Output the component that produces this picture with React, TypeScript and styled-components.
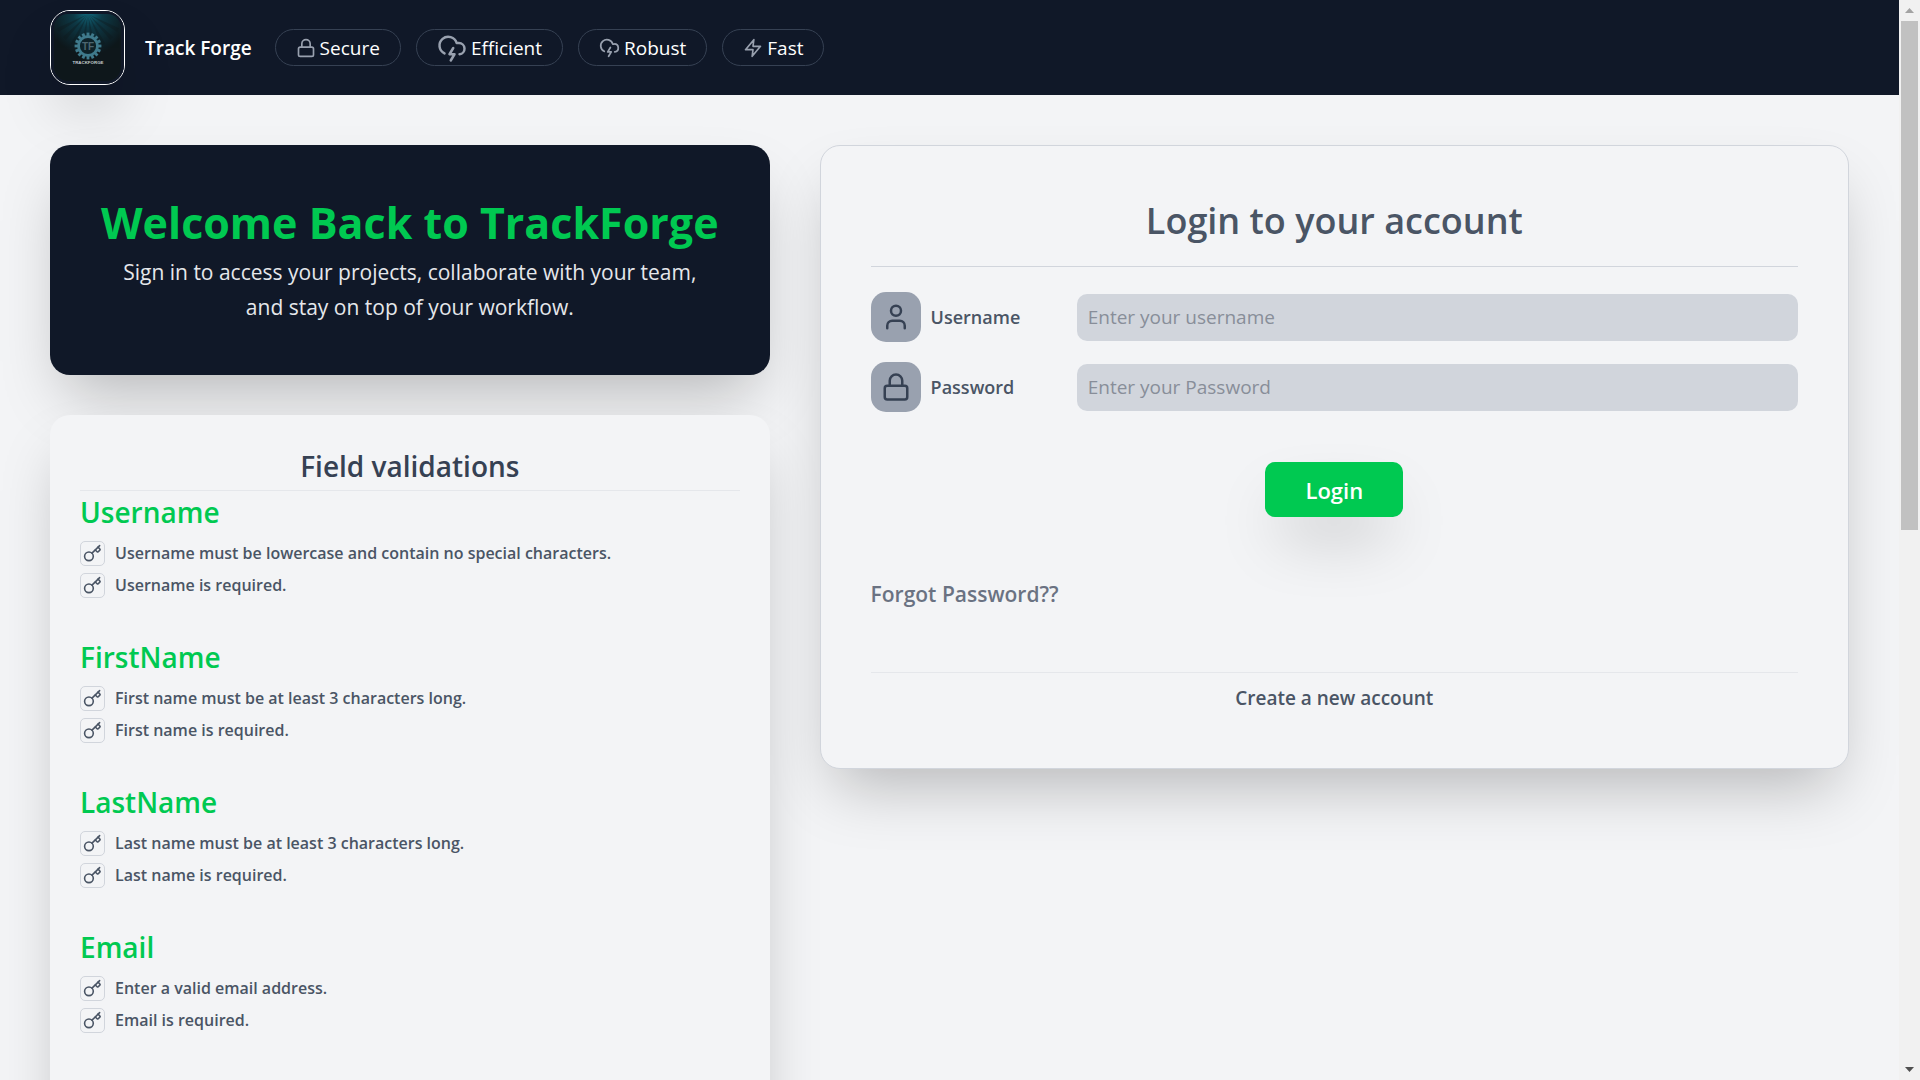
import React from "react";
import styled, { createGlobalStyle } from "styled-components";

const color = {
  navy: "#101828",
  page: "#f3f4f6",
  green: "#00c951",
  line: "#d1d5dc",
  lineSoft: "#e5e7eb",
  slate: "#99a1af",
  textSoft: "#6a7282",
  text: "#4a5565",
  textStrong: "#364153",
};

const shadow = "0 31px 62px -15px rgba(0, 0, 0, 0.25)";

const GlobalStyle = createGlobalStyle`
  *, *::before, *::after { box-sizing: border-box; }
  body {
    margin: 0;
    background: ${color.page};
    color: #000;
    font-family: "Segoe UI", "Open Sans", "Noto Sans", sans-serif;
    font-size: 19px;
    line-height: 30px;
  }
  h1, h2, h3, p, ul { margin: 0; padding: 0; }
  ul { list-style: none; }
  button, input { font: inherit; border: 0; }
  a { color: inherit; text-decoration: none; }
  svg { display: block; flex: none; }
`;

const Frame = styled.div`
  display: grid;
  grid-template-columns: minmax(0, 1fr) 21px;
  height: 100vh;
`;

const Scroller = styled.div`
  overflow-x: hidden;
  overflow-y: auto;
  scrollbar-width: none;
`;

const Page = styled.div`
  display: flex;
  flex-direction: column;
  min-height: 200vh;
`;

const Track = styled.div`
  display: flex;
  flex-direction: column;
  align-items: center;
  background: #f1f1f1;
`;

const Arrow = styled.div<{ $down?: boolean }>`
  display: grid;
  place-items: center;
  height: 21px;
  transform: ${(p) => (p.$down ? "rotate(180deg)" : "none")};
  color: ${(p) => (p.$down ? "#505050" : "#a3a3a3")};
`;

const ThumbLane = styled.div`
  flex: 1;
  width: 17px;
`;

const Thumb = styled.div`
  height: 49%;
  background: #c1c1c1;
`;

const Header = styled.header`
  display: flex;
  align-items: center;
  gap: 20px;
  padding: 10px 50px;
  background: ${color.navy};
`;

const LogoBox = styled.div`
  width: 75px;
  height: 75px;
  border: 1px solid #fff;
  border-radius: 20px;
  overflow: hidden;
  box-shadow: ${shadow};
`;

const Brand = styled.span`
  color: #fff;
  font-weight: 600;
`;

const Pills = styled.ul`
  display: flex;
  gap: 15px;
  padding-left: 3px;
`;

const Pill = styled.li`
  display: flex;
  align-items: center;
  gap: 4px;
  height: 37px;
  padding: 0 20px;
  border: 1px solid ${color.textStrong};
  border-radius: 20px;
  color: #fff;
  svg { color: ${color.slate}; }
`;

const Main = styled.main`
  flex: 1;
  display: grid;
  grid-template-columns: 40% minmax(0, 1fr);
  gap: 50px;
  padding: 50px;
`;

const LeftColumn = styled.div`
  display: flex;
  flex-direction: column;
  gap: 40px;
`;

const Welcome = styled.section`
  padding: 50px;
  border-radius: 20px;
  background: ${color.navy};
  box-shadow: ${shadow};
  text-align: center;
`;

const WelcomeTitle = styled.h1`
  padding-bottom: 4px;
  color: ${color.green};
  font-size: 43px;
  font-weight: 700;
  line-height: 56px;
`;

const WelcomeText = styled.p`
  padding: 0 15px;
  color: ${color.lineSoft};
  font-size: 21px;
  line-height: 35px;
`;

const Validations = styled.section`
  flex: 1;
  padding: 30px;
  border-radius: 20px;
  background: ${color.page};
  box-shadow: ${shadow};
`;

const ValidationsTitle = styled.h2`
  padding-bottom: 3px;
  border-bottom: 1px solid ${color.lineSoft};
  color: ${color.textStrong};
  font-size: 28px;
  font-weight: 600;
  line-height: 42px;
  text-align: center;
`;

const Group = styled.section`
  padding-bottom: 38px;
`;

const GroupTitle = styled.h3`
  padding: 1px 0 9px;
  color: ${color.green};
  font-size: 28px;
  font-weight: 600;
  line-height: 40px;
`;

const Rules = styled.ul`
  display: flex;
  flex-direction: column;
  gap: 7px;
`;

const Rule = styled.li`
  display: flex;
  align-items: center;
  gap: 10px;
  color: ${color.text};
  font-size: 16px;
  font-weight: 600;
  line-height: 25px;
`;

const KeyBox = styled.span`
  display: grid;
  place-items: center;
  width: 25px;
  height: 25px;
  border: 1px solid ${color.line};
  border-radius: 5px;
`;

const LoginCard = styled.section`
  align-self: start;
  padding: 50px;
  border: 1px solid ${color.line};
  border-radius: 20px;
  background: ${color.page};
  box-shadow: ${shadow};
`;

const LoginTitle = styled.h2`
  padding-bottom: 20px;
  border-bottom: 1px solid ${color.line};
  color: ${color.text};
  font-size: 36px;
  font-weight: 600;
  line-height: 50px;
  text-align: center;
`;

const Form = styled.form`
  display: flex;
  flex-direction: column;
  gap: 20px;
  padding-top: 25px;
`;

const Field = styled.div`
  display: grid;
  grid-template-columns: minmax(0, 2fr) minmax(0, 7fr);
  align-items: center;
`;

const FieldLabel = styled.label`
  display: flex;
  align-items: center;
  gap: 10px;
  color: ${color.text};
  font-size: 18px;
  font-weight: 600;
`;

const IconTile = styled.span`
  padding: 10px;
  border-radius: 15px;
  background: ${color.slate};
  color: ${color.textStrong};
`;

const TextBox = styled.input`
  width: 100%;
  height: 47px;
  padding: 0 11px;
  border-radius: 10px;
  background: ${color.line};
  color: ${color.textStrong};
  &::placeholder { color: #888e99; opacity: 1; }
`;

const LoginButton = styled.button`
  align-self: center;
  margin-top: 30px;
  height: 55px;
  padding: 0 40px;
  border-radius: 10px;
  background: ${color.green};
  box-shadow: ${shadow};
  color: #fff;
  font-size: 22px;
  font-weight: 600;
`;

const Forgot = styled.a`
  display: block;
  padding: 60px 0;
  color: ${color.textSoft};
  font-size: 21px;
  font-weight: 600;
  line-height: 35px;
`;

const Create = styled.a`
  display: block;
  padding: 10px 0 5px;
  border-top: 1px solid ${color.lineSoft};
  color: ${color.text};
  font-weight: 600;
  text-align: center;
`;

type IconProps = { size: number; stroke?: number };

const Icon = ({ size, stroke = 2, children }: IconProps & { children: React.ReactNode }) => (
  <svg width={size} height={size} viewBox="0 0 24 24" fill="none" stroke="currentColor"
    strokeWidth={stroke} strokeLinecap="round" strokeLinejoin="round" aria-hidden="true">
    {children}
  </svg>
);

const LockIcon = (p: IconProps) => (
  <Icon {...p}>
    <rect x="3" y="11" width="18" height="11" rx="2" />
    <path d="M7 11V7a5 5 0 0 1 10 0v4" />
  </Icon>
);

const StormIcon = (p: IconProps) => (
  <Icon {...p}>
    <path d="M6 16.326A7 7 0 1 1 15.71 8h1.79a4.5 4.5 0 0 1 .5 8.973" />
    <path d="m13 12-3 5h4l-3 5" />
  </Icon>
);

const BoltIcon = (p: IconProps) => (
  <Icon {...p}>
    <path d="M13 2 3 14h9l-1 8 10-12h-9l1-8Z" />
  </Icon>
);

const UserIcon = (p: IconProps) => (
  <Icon {...p}>
    <path d="M19 21v-2a4 4 0 0 0-4-4H9a4 4 0 0 0-4 4v2" />
    <circle cx="12" cy="7" r="4" />
  </Icon>
);

const KeyIcon = (p: IconProps) => (
  <Icon {...p}>
    <path d="m15.5 7.5 2.3 2.3a1 1 0 0 0 1.4 0l2.1-2.1a1 1 0 0 0 0-1.4L19 4" />
    <path d="m21 2-9.6 9.6" />
    <circle cx="7.5" cy="15.5" r="5.5" />
  </Icon>
);

const Logo = () => (
  <svg width="73" height="73" viewBox="0 0 73 73" role="img" aria-label="TrackForge">
    <defs>
      <radialGradient id="glow" gradientUnits="userSpaceOnUse" cx="37" cy="2" r="42">
        <stop offset="0" stopColor="#126b80" />
        <stop offset="0.35" stopColor="#0e3a47" />
        <stop offset="1" stopColor="#0e171b" />
      </radialGradient>
    </defs>
    <rect width="73" height="73" fill="#101828" />
    <rect x="3" y="3" width="67" height="67" rx="14" fill="url(#glow)" />
    <g fill="#0e171b" opacity="0.35">
      {[-62, -44, -27, -9, 9, 27, 44, 62].map((a) => (
        <path key={a} d="M37 3l-2 34h4z" transform={`rotate(${a} 37 3)`} />
      ))}
    </g>
    <g fill="#3f7a8c">
      {Array.from({ length: 16 }, (_, i) => (
        <rect key={i} x="35.6" y="21.6" width="2.8" height="4" transform={`rotate(${i * 22.5} 37 35)`} />
      ))}
    </g>
    <circle cx="37" cy="35" r="9.4" fill="#0e2229" stroke="#3f7a8c" strokeWidth="2.6" />
    <text x="37" y="39" textAnchor="middle" fontFamily="Liberation Sans, sans-serif"
      fontSize="10" fontWeight="700" fill="#4d6670">TF</text>
    <text x="37" y="53" textAnchor="middle" fontFamily="Liberation Sans, sans-serif"
      fontSize="4.4" fontWeight="700" fill="#c3cbce">TRACKFORGE</text>
  </svg>
);

const groups = [
  { title: "Username", rules: ["Username must be lowercase and contain no special characters.", "Username is required."] },
  { title: "FirstName", rules: ["First name must be at least 3 characters long.", "First name is required."] },
  { title: "LastName", rules: ["Last name must be at least 3 characters long.", "Last name is required."] },
  { title: "Email", rules: ["Enter a valid email address.", "Email is required."] },
];

const ArrowShape = () => (
  <svg width="9" height="5" viewBox="0 0 9 5"><path d="M4.5 0 9 5H0z" fill="currentColor" /></svg>
);

export default function App() {
  return (
    <>
      <GlobalStyle />
      <Frame>
        <Scroller>
          <Page>
            <Header>
              <LogoBox><Logo /></LogoBox>
              <Brand>Track Forge</Brand>
              <Pills>
                <Pill><LockIcon size={20} />Secure</Pill>
                <Pill><StormIcon size={30} />Efficient</Pill>
                <Pill><StormIcon size={21} />Robust</Pill>
                <Pill><BoltIcon size={20} />Fast</Pill>
              </Pills>
            </Header>
            <Main>
              <LeftColumn>
                <Welcome>
                  <WelcomeTitle>Welcome Back to TrackForge</WelcomeTitle>
                  <WelcomeText>
                    Sign in to access your projects, collaborate with your team, and stay on top of your workflow.
                  </WelcomeText>
                </Welcome>
                <Validations>
                  <ValidationsTitle>Field validations</ValidationsTitle>
                  {groups.map((g) => (
                    <Group key={g.title}>
                      <GroupTitle>{g.title}</GroupTitle>
                      <Rules>
                        {g.rules.map((r) => (
                          <Rule key={r}><KeyBox><KeyIcon size={19} /></KeyBox>{r}</Rule>
                        ))}
                      </Rules>
                    </Group>
                  ))}
                </Validations>
              </LeftColumn>
              <LoginCard>
                <LoginTitle>Login to your account</LoginTitle>
                <Form onSubmit={(e) => e.preventDefault()}>
                  <Field>
                    <FieldLabel htmlFor="username"><IconTile><UserIcon size={30} /></IconTile>Username</FieldLabel>
                    <TextBox id="username" type="text" placeholder="Enter your username" />
                  </Field>
                  <Field>
                    <FieldLabel htmlFor="password"><IconTile><LockIcon size={30} /></IconTile>Password</FieldLabel>
                    <TextBox id="password" type="password" placeholder="Enter your Password" />
                  </Field>
                  <LoginButton type="submit">Login</LoginButton>
                </Form>
                <Forgot href="#forgot">Forgot Password??</Forgot>
                <Create href="#register">Create a new account</Create>
              </LoginCard>
            </Main>
          </Page>
        </Scroller>
        <Track aria-hidden="true">
          <Arrow><ArrowShape /></Arrow>
          <ThumbLane><Thumb /></ThumbLane>
          <Arrow $down><ArrowShape /></Arrow>
        </Track>
      </Frame>
    </>
  );
}
